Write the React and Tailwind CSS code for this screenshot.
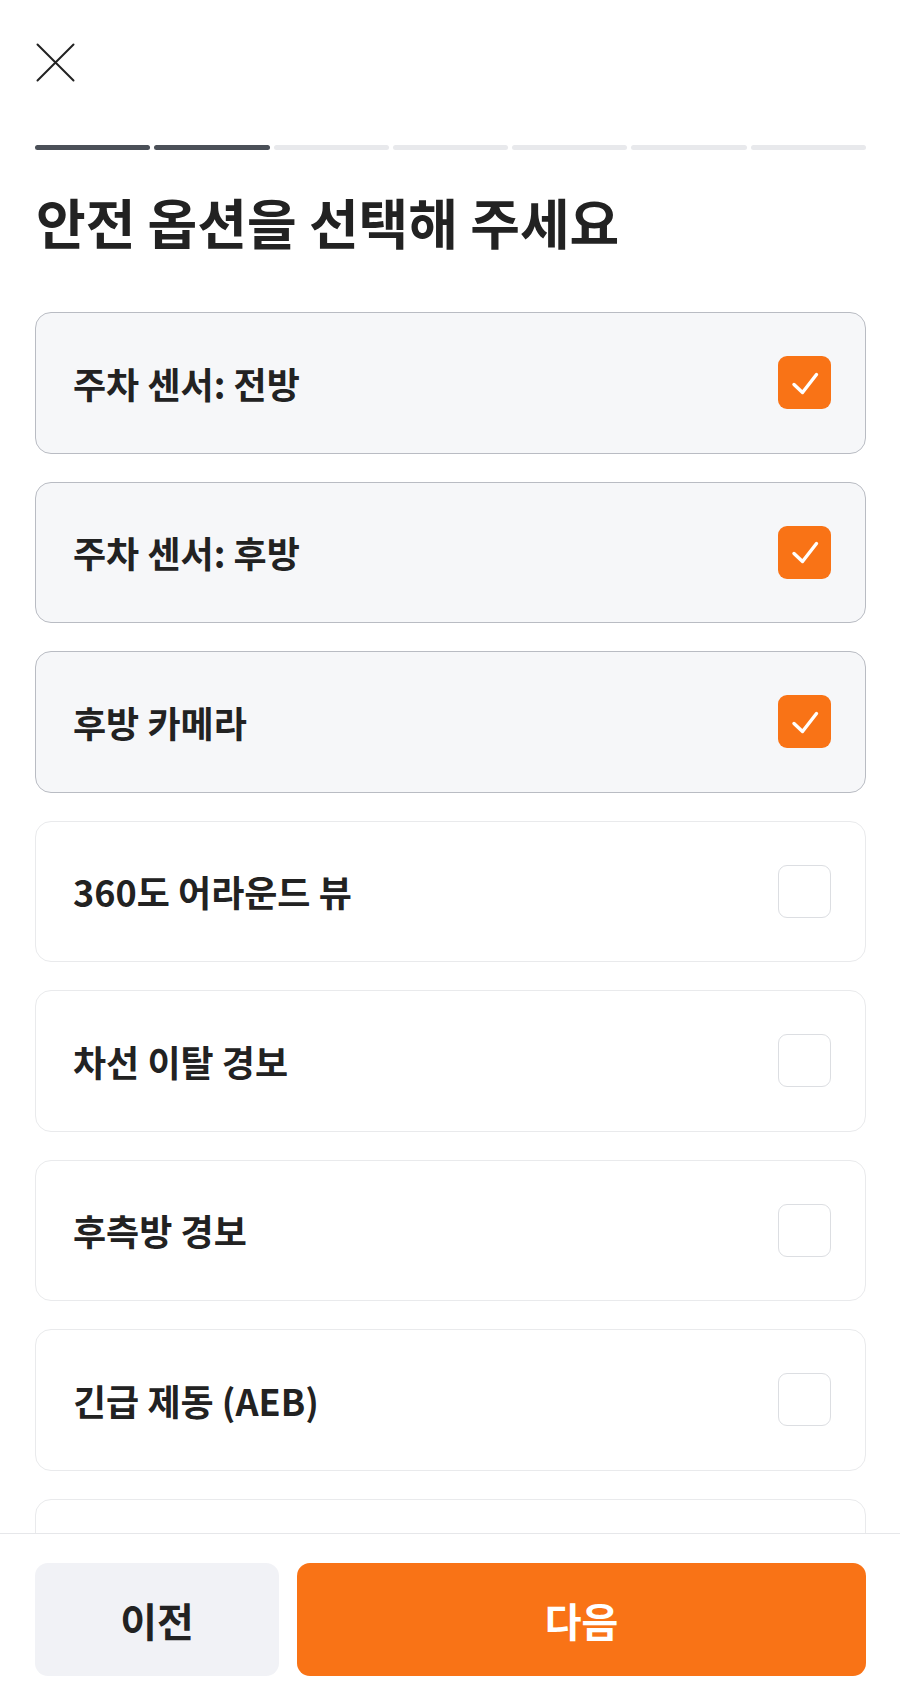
const OPTIONS = [
  { label: '주차 센서: 전방', checked: true },
  { label: '주차 센서: 후방', checked: true },
  { label: '후방 카메라', checked: true },
  { label: '360도 어라운드 뷰', checked: false },
  { label: '차선 이탈 경보', checked: false },
  { label: '후측방 경보', checked: false },
  { label: '긴급 제동 (AEB)', checked: false },
  { label: '', checked: false },
]

function Checkbox({ checked }) {
  if (checked) {
    return (
      <div className="w-[53px] h-[53px] rounded-[9px] bg-[#f97316] flex items-center justify-center shrink-0">
        <svg width="30" height="30" viewBox="0 0 30 30" fill="none">
          <path d="M4 16.5 L12.5 24.5 L26.5 6.5" stroke="#fff" strokeWidth="3.4" strokeLinecap="round" strokeLinejoin="round" />
        </svg>
      </div>
    )
  }
  return <div className="w-[53px] h-[53px] rounded-[9px] border-[1.5px] border-[#dcdee2] bg-white shrink-0" />
}

export default function App() {
  return (
    <div className="w-full h-[1693px] flex flex-col bg-white text-[#222222]"
         style={{ fontFamily: '"Noto Sans CJK KR", "Noto Sans", sans-serif' }}>

      {/* Scrollable content */}
      <div className="flex-1 min-h-0 overflow-hidden pl-[35px] pr-[34px]">
        {/* Close */}
        <div className="mt-[43px] ml-[1px] w-[39px] h-[39px]">
          <svg width="39" height="39" viewBox="0 0 39 39" fill="none">
            <path d="M1.5 1.5 L37.5 37.5 M37.5 1.5 L1.5 37.5" stroke="#222" strokeWidth="2" strokeLinecap="round" />
          </svg>
        </div>

        {/* Progress */}
        <div className="mt-[63px] flex gap-[4px]">
          {[0, 1, 2, 3, 4, 5, 6].map(i => (
            <div key={i} className={i < 2 ? 'flex-1 h-[5px] rounded-full bg-[#4b5058]' : 'flex-1 h-[5px] rounded-full bg-[#e8e9ec]'} />
          ))}
        </div>

        <h1 className="mt-[45px] ml-[1px] text-[54px] leading-none font-bold">
          안전 옵션을 선택해 주세요
        </h1>

        {/* Options */}
        <div className="mt-[63px] flex flex-col gap-[28px]">
          {OPTIONS.map((o, i) => (
            <div key={i}
                 className={o.checked
                   ? 'h-[141.5px] shrink-0 rounded-[16px] border-[1.5px] border-[#b9bcc3] bg-[#f6f7f9] flex items-center justify-between pl-[37px] pr-[34px]'
                   : 'h-[141.5px] shrink-0 rounded-[16px] border-[1.5px] border-[#e9eaec] bg-white flex items-center justify-between pl-[37px] pr-[34px]'}>
              <span className="text-[36px] font-semibold leading-none">{o.label}</span>
              <Checkbox checked={o.checked} />
            </div>
          ))}
        </div>
      </div>

      {/* Footer */}
      <div className="border-t border-[#e6e7ea] pt-[29px] pb-[17px] pl-[35px] pr-[34px] flex gap-[18px] bg-white">
        <button className="w-[244px] h-[113px] rounded-[13px] bg-[#f1f2f6] text-[40px] font-bold text-[#222222]">
          이전
        </button>
        <button className="flex-1 h-[113px] rounded-[13px] bg-[#f97316] text-[40px] font-bold text-white">
          다음
        </button>
      </div>
    </div>
  )
}
